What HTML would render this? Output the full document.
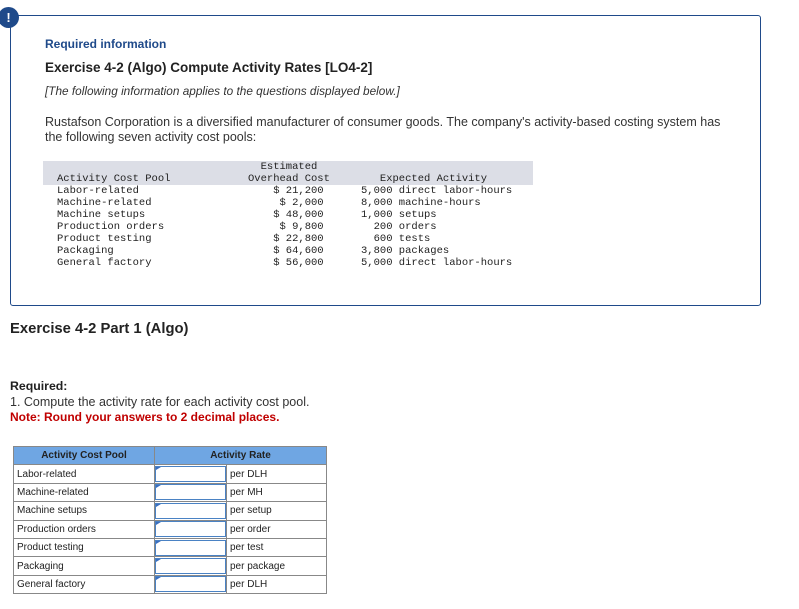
<!DOCTYPE html>
<html><head><meta charset="utf-8"><style>
body{margin:0;width:799px;height:609px;background:#fff;font-family:"Liberation Sans",sans-serif;color:#222;position:relative;overflow:hidden}
.a{position:absolute;white-space:nowrap}
.box{position:absolute;left:10px;top:15px;width:749px;height:289px;border:1.5px solid #1f4a8a;border-radius:3px}
.circ{position:absolute;left:-2px;top:7px;width:21px;height:21px;border-radius:50%;background:#1f4a8a;color:#fff;font-weight:bold;font-size:13px;text-align:center;line-height:21px}
.mono{font-family:"Liberation Mono",monospace;font-size:10.5px;line-height:12px;color:#222;white-space:pre;margin:0}
.gray{position:absolute;left:43px;top:161px;width:490px;height:24px;background:#dcdee6}
table{position:absolute;left:13px;top:446px;border-collapse:collapse;font-size:10px}
td{border:1px solid #888;height:17.4px;padding:0 3px;color:#222;box-sizing:border-box}
tr{height:18.4px}
th{background:#6fa6e3;border:1px solid #888;height:18px;font-weight:bold;font-size:10px;color:#222;box-sizing:border-box}
td.in{padding:0;border:1px solid #888}
.inp{position:relative;height:14px;border:1.5px solid #4a82c4;margin:0}
.inp:before{content:"";position:absolute;left:0;top:0;border-left:5px solid #3b6fc0;border-bottom:3px solid transparent}
</style></head><body>
<div class="box"></div>
<div class="circ">!</div>
<div class="a" style="left:45px;top:37px;font-size:12px;font-weight:bold;color:#1f4a8a">Required information</div>
<div class="a" style="left:45px;top:60px;font-size:13.5px;font-weight:bold;color:#222">Exercise 4-2 (Algo) Compute Activity Rates [LO4-2]</div>
<div class="a" style="left:45px;top:84px;font-size:11.8px;font-style:italic;color:#333">[The following information applies to the questions displayed below.]</div>
<div class="a" style="left:45px;top:115px;font-size:12.5px;line-height:15px;color:#333">Rustafson Corporation is a diversified manufacturer of consumer goods. The company's activity-based costing system has<br>the following seven activity cost pools:</div>
<div class="gray"></div>
<pre class="a mono" style="left:57px;top:173px">Activity Cost Pool
Labor-related
Machine-related
Machine setups
Production orders
Product testing
Packaging
General factory</pre>
<pre class="a mono" style="left:248px;top:161px">  Estimated
Overhead Cost
    $ 21,200
     $ 2,000
    $ 48,000
     $ 9,800
    $ 22,800
    $ 64,600
    $ 56,000</pre>
<pre class="a mono" style="left:361px;top:173px">   Expected Activity
5,000 direct labor-hours
8,000 machine-hours
1,000 setups
  200 orders
  600 tests
3,800 packages
5,000 direct labor-hours</pre>
<div class="a" style="left:10px;top:321px;font-size:14.8px;font-weight:bold;color:#222">Exercise 4-2 Part 1 (Algo)</div>
<div class="a" style="left:10px;top:379px;font-size:12.3px;font-weight:bold;color:#222">Required:</div>
<div class="a" style="left:10px;top:395px;font-size:12.5px;color:#333">1. Compute the activity rate for each activity cost pool.</div>
<div class="a" style="left:10px;top:410px;font-size:12px;font-weight:bold;color:#c00000">Note: Round your answers to 2 decimal places.</div>
<table>
<tr><th style="width:141px">Activity Cost Pool</th><th colspan="2">Activity Rate</th></tr>
<tr><td style="width:141px">Labor-related</td><td class="in" style="width:72px"><div class="inp"></div></td><td style="width:100px">per DLH</td></tr>
<tr><td>Machine-related</td><td class="in"><div class="inp"></div></td><td>per MH</td></tr>
<tr><td>Machine setups</td><td class="in"><div class="inp"></div></td><td>per setup</td></tr>
<tr><td>Production orders</td><td class="in"><div class="inp"></div></td><td>per order</td></tr>
<tr><td>Product testing</td><td class="in"><div class="inp"></div></td><td>per test</td></tr>
<tr><td>Packaging</td><td class="in"><div class="inp"></div></td><td>per package</td></tr>
<tr><td>General factory</td><td class="in"><div class="inp"></div></td><td>per DLH</td></tr>
</table>
</body></html>
